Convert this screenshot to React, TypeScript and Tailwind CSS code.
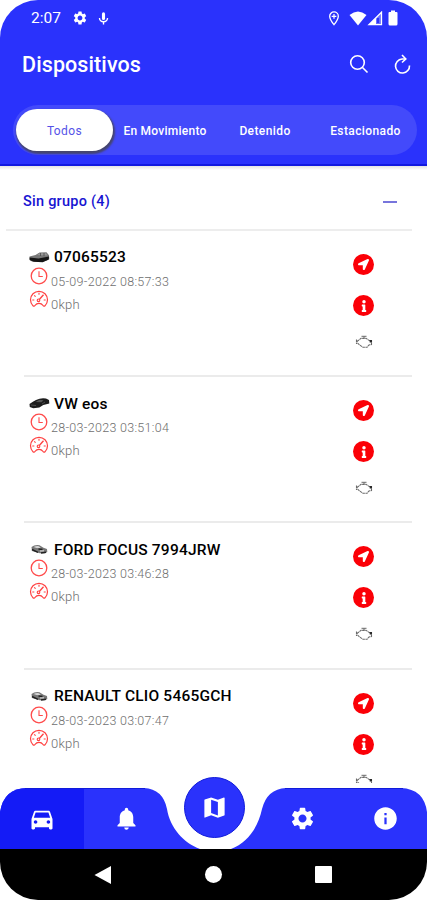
import { useState } from "react";
import {
  MdDirectionsCar,
  MdInfo,
  MdMap,
  MdNotifications,
  MdSettings,
} from "react-icons/md";
import { FaInfo, FaLocationArrow } from "react-icons/fa";

const tabs = [
  { label: "Todos", className: "w-[97px] text-[12px] tracking-[0.4px]" },
  { label: "En Movimiento", className: "w-[104px] text-[12px] tracking-[0.25px]" },
  { label: "Detenido", className: "w-[96px] text-[12px] tracking-[0.4px]" },
  { label: "Estacionado", className: "w-[105px] text-[12px] tracking-[0.4px]" },
];

const devices = [
  { name: "07065523", date: "05-09-2022 08:57:33", car: "suv" },
  { name: "VW eos", date: "28-03-2023 03:51:04", car: "sedan" },
  { name: "FORD FOCUS 7994JRW", date: "28-03-2023 03:46:28", car: "small" },
  { name: "RENAULT CLIO 5465GCH", date: "28-03-2023 03:07:47", car: "small" },
];

function StatusBar() {
  return (
    <div className="flex h-9 items-center pl-[31px] pr-[29px] text-white">
      <span className="w-[41px] pt-px text-[15.5px]">2:07</span>
      <MdSettings className="size-4" />
      <svg viewBox="0 0 12 16" className="ml-[10px] h-[15px] w-[11px]">
        <path d="M6 3v5" stroke="white" strokeWidth="3.4" strokeLinecap="round" />
        <path d="M1.6 7.5a4.4 4 0 0 0 8.8 0M6 12v2.5" fill="none" stroke="white" strokeWidth="1.5" />
      </svg>
      <div className="ml-auto flex items-center">
        <svg viewBox="0 0 12 16" className="mr-[9px] h-[15px] w-3">
          <path d="M6 1a4.6 4.6 0 0 0-4.6 4.6C1.4 9 6 14.6 6 14.6S10.6 9 10.6 5.6A4.6 4.6 0 0 0 6 1z" fill="none" stroke="white" strokeWidth="1.4" />
          <path d="M6 3.2v5M3.5 5.7h5" stroke="white" strokeWidth="1.3" />
        </svg>
        <svg viewBox="0 0 18 15" className="h-[15px] w-[18px]">
          <path d="M.5 4Q9-3 17.500 4L9 14.500z" fill="white" />
        </svg>
        <svg viewBox="0 0 16 15" className="h-[15px] w-4">
          <path d="M14.500 1.200v12.500H2z" fill="white" fillOpacity="0.300" stroke="white" strokeWidth="1.300" />
          <path d="M9 6.500v7H2.500z" fill="white" />
          <path d="M11 7v5" stroke="#2a32fc" strokeWidth="2" />
        </svg>
        <svg viewBox="0 0 10 16" className="ml-[5px] h-4 w-[10px]">
          <path d="M3 .5h4V2h1.500q1 0 1 1v11q0 1.500-1.500 1.500H2Q.5 15.500.5 14V3q0-1 1-1H3z" fill="white" />
        </svg>
      </div>
    </div>
  );
}

function CarIcon({ kind }: { kind: string }) {
  if (kind === "sedan") {
    return (
      <svg viewBox="0 0 21 12" className="h-3 w-[21px]">
        <path d="M.5 7Q4 4.500 7 3Q12 .5 17 1.500l3 1.500.3 3.500-6 1.500-4 2.500-6 .8L.8 10z" fill="#1c1c1c" />
        <path d="M6.500 5l4-2.200 4 .4-2 2z" fill="#555" />
        <path d="M2 8l5 .5M13 7l3-2" stroke="#606060" strokeWidth=".7" />
      </svg>
    );
  }
  if (kind === "suv") {
    return (
      <svg viewBox="0 0 21 12" className="h-3 w-[21px]">
        <path d="M.5 5.500l6-1.500 4-2.500 7-.3 2.500 3 .3 4-3 1.500-5 1.300L3 10.500.7 9z" fill="#777" />
        <path d="M.5 6.500l9 1 10.500-2-.3 3-6 2.800-9-.5L.7 9z" fill="#151515" />
        <path d="M8 4l3-1.800 6 .1 1.500 2.200z" fill="#999" />
        <path d="M11.500 2v3M15 2v3" stroke="#444" strokeWidth=".7" />
      </svg>
    );
  }
  return (
    <svg viewBox="0 0 21 12" className="h-3 w-[21px]">
      <path d="M2.500 4q3-2.500 8-1.800l4 2.500 3.500 1.300.3 3-2.500 1.200h-5L3 8z" fill="#777" />
      <path d="M4.500 4q3-1.500 5.500-.8l2 2-4.500-.1z" fill="#d4d4d4" />
      <path d="M3 6.500l6 2.800M12 10l5-.8M9.500 6l4 .5" stroke="#222" strokeWidth="1.400" />
      <path d="M11 8l4-.2" stroke="#ddd" strokeWidth="1" />
    </svg>
  );
}

function ClockIcon() {
  return (
    <svg viewBox="0 0 18 18" className="ml-px size-[18px]" fill="none" stroke="#ff4a4a">
      <circle cx="9" cy="9" r="7.800" strokeWidth="1.300" />
      <path d="M9 4.300V9.500h3.800" strokeWidth="1.100" />
    </svg>
  );
}

function GaugeIcon() {
  return (
    <svg viewBox="0 0 20 18" className="h-[18px] w-5" fill="none" stroke="#ff4040">
      <path d="M4 15.800A8.500 8.500 0 1 1 16 15.800q-1.200 1-2.200-.6Q12.600 13.300 10 13.300T6.200 15.200q-1 1.600-2.200.6z" strokeWidth="1.200" />
      <circle cx="9.500" cy="10.300" r="1.300" strokeWidth="1.100" />
      <path d="M10.500 9.200l4-4.500" strokeWidth="1.300" />
      <path d="M3.300 10h2M14.700 10h2M5.200 5.300l1.400 1.400M10 2.800v2" strokeWidth="1.100" />
    </svg>
  );
}

function EngineIcon() {
  return (
    <svg viewBox="0 0 18 14" className="h-[14px] w-[18px]" fill="none" stroke="#6a6a6a">
      <path d="M6.500 1.300h5M9 1.300v2" strokeWidth="1" />
      <path d="M1.500 4.500v4.500M2 6.500L6 3.400h5l3.500 2.200L16.500 5.500v4L14 10l-2 2.300H8L4.500 9.800 2 7.500" strokeWidth="1.100" strokeDasharray="2.600 .5" />
      <path d="M14.700 5h2.300v2.500h-2.300z" fill="#2a2a2a" stroke="none" />
    </svg>
  );
}

function DeviceRow({ device }: { device: (typeof devices)[number] }) {
  return (
    <li className="ml-6 mr-[15px] flex h-[146.2px] justify-between border-b-2 border-[#ebebeb] pl-[5px]">
      <div className="pt-4">
        <div className="flex h-5 items-center gap-[4px]">
          <CarIcon kind={device.car} />
          <h2 className="whitespace-nowrap pt-[2px] text-[15.5px] font-medium tracking-[0.2px] text-black">
            {device.name}
          </h2>
        </div>
        <div className="flex h-[23px] items-start text-[12.5px] font-light text-[#6e6e6e]">
          <ClockIcon />
          <span className="ml-[3px] pt-[5px] leading-[20px] tracking-[0.3px]">{device.date}</span>
        </div>
        <div className="flex h-[23px] items-start text-[13px] font-light text-[#6e6e6e]">
          <GaugeIcon />
          <span className="ml-0.5 pt-[5px] leading-[20px] tracking-[0.2px]">0kph</span>
        </div>
      </div>
      <div className="mr-[38px] flex w-[21px] flex-col items-center pt-[23px]">
        <button className="flex size-[21px] items-center justify-center rounded-full bg-[#fb0007] text-white">
          <FaLocationArrow className="size-[11px]" />
        </button>
        <button className="mt-5 flex size-[21px] items-center justify-center rounded-full bg-[#fb0007] text-white">
          <FaInfo className="size-3" />
        </button>
        <div className="mt-[19px]">
          <EngineIcon />
        </div>
      </div>
    </li>
  );
}

function BottomNav() {
  return (
    <nav className="absolute inset-x-0 bottom-[51px] h-[72px]">
      <svg viewBox="0 0 427 72" className="absolute inset-0 h-[72px] w-[427px]">
        <path d="M0 72V35Q4 11 27 11H144Q163 12 167 32C170 51 184 66 200 72zM231 72C247 66 258 51 262 32Q267 12 286 11H401Q424 12 427 35V72z" fill="#2a32fc" />
        <path d="M0 72V35Q4 11 27 11H84V72z" fill="#141bf6" />
        <path d="M25 11.500H145M285 11.500H403" stroke="#101bda" />
      </svg>
      <div className="relative flex h-full items-start text-white">
        <button className="flex h-full w-[84px] items-center justify-center pt-[11px]">
          <MdDirectionsCar className="size-7" />
        </button>
        <button className="flex h-full w-[84px] items-center justify-center pt-[11px]">
          <MdNotifications className="size-[27px]" />
        </button>
        <button className="ml-4 flex size-[61px] shrink-0 items-center justify-center rounded-full border border-[#101bda] bg-[#2a32fc]">
          <MdMap className="size-[27px]" />
        </button>
        <button className="ml-[15px] flex h-full w-[84px] items-center justify-center pt-[11px]">
          <MdSettings className="size-[27px]" />
        </button>
        <button className="flex h-full w-[83px] items-center justify-center pt-[11px]">
          <MdInfo className="size-[27px]" />
        </button>
      </div>
    </nav>
  );
}

export default function App() {
  const [activeTab, setActiveTab] = useState("Todos");

  return (
    <div className="h-[900px] w-[427px] overflow-hidden bg-white font-['Roboto',sans-serif]">
      <div className="relative flex h-full flex-col overflow-hidden rounded-[38px] bg-white">
        <header className="h-[166px] shrink-0 border-b-2 border-[#1219e0] bg-[#2a32fc]">
          <StatusBar />
          <div className="flex h-[58px] items-center pl-[22px] pr-[16px] text-white">
            <h1 className="text-[21.5px] font-medium tracking-[0.1px]">Dispositivos</h1>
            <svg viewBox="0 0 20 20" className="ml-auto mb-0.5 size-5" fill="none" stroke="white" strokeWidth="1.6">
              <circle cx="8.5" cy="8.5" r="6.8" />
              <path d="M13.500 13.500l5 5" />
            </svg>
            <svg viewBox="0 0 18 20" className="ml-6 mb-0.5 h-5 w-[18px]" fill="none" stroke="white" strokeWidth="1.6">
              <path d="M12 5H9A7 7 0 1 0 16.500 11.500" />
              <path d="M9 1l3.800 4-3.800 3.500" />
            </svg>
          </div>
          <div className="ml-[13px] mt-[11px] flex h-[50px] w-[404px] items-center rounded-full bg-[#434afb] pl-[3px]">
            {tabs.map((tab) => (
              <button
                key={tab.label}
                onClick={() => setActiveTab(tab.label)}
                className={`h-[42px] shrink-0 whitespace-nowrap rounded-full pt-[2px] ${tab.className} ${
                  activeTab === tab.label
                    ? "bg-white text-[#5552e8] shadow-[1px_2px_2px_1px_#45456f]"
                    : "font-medium text-white"
                }`}
              >
                {tab.label}
              </button>
            ))}
          </div>
        </header>

        <main className="mb-[66px] min-h-0 flex-1 overflow-hidden">
          <div className="h-1 bg-linear-to-b from-[#e4e4e4] to-white" />
          <div className="ml-1.5 mr-[15px] flex h-[61px] items-center justify-between border-b-2 border-[#ededed] pl-[17px] pr-[15px] pt-1">
            <span className="text-[14.5px] font-medium tracking-[0.25px] text-[#1714d2]">
              Sin grupo (4)
            </span>
            <span className="h-[2px] w-[14px] bg-[#7775dc]" />
          </div>
          <ul>
            {devices.map((device) => (
              <DeviceRow key={device.name} device={device} />
            ))}
          </ul>
        </main>

        <BottomNav />

        <div className="relative flex h-[51px] shrink-0 items-center bg-black pl-[94px] pr-[95px]">
          <svg viewBox="0 0 17 18" className="h-[18px] w-[17px]">
            <path d="M17 0v18L.5 9z" fill="white" />
          </svg>
          <span className="ml-[94px] size-[17px] rounded-full bg-white" />
          <span className="ml-auto size-[17px] rounded-[1px] bg-white" />
        </div>
      </div>
    </div>
  );
}
